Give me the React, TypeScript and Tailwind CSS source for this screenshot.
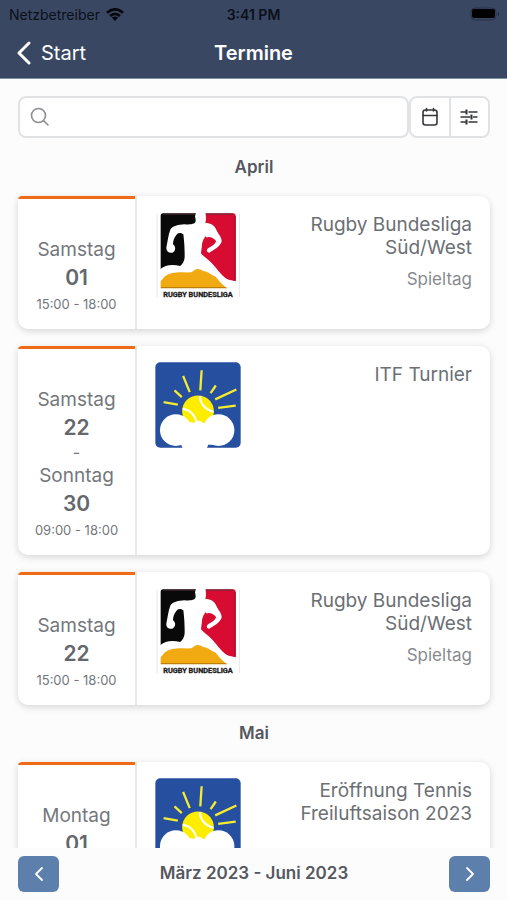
import React from 'react';

type LogoKind = 'rugby' | 'tennis';

interface DayInfo {
  name: string;
  number: string;
}

interface Termin {
  id: number;
  days: DayInfo[];
  time?: string;
  title: string;
  subtitle?: string;
  logo: LogoKind;
}

interface Month {
  name: string;
  termine: Termin[];
}

const months: Month[] = [
  {
    name: 'April',
    termine: [
      {
        id: 1,
        days: [{ name: 'Samstag', number: '01' }],
        time: '15:00 - 18:00',
        title: 'Rugby Bundesliga Süd/West',
        subtitle: 'Spieltag',
        logo: 'rugby',
      },
      {
        id: 2,
        days: [
          { name: 'Samstag', number: '22' },
          { name: 'Sonntag', number: '30' },
        ],
        time: '09:00 - 18:00',
        title: 'ITF Turnier',
        logo: 'tennis',
      },
      {
        id: 3,
        days: [{ name: 'Samstag', number: '22' }],
        time: '15:00 - 18:00',
        title: 'Rugby Bundesliga Süd/West',
        subtitle: 'Spieltag',
        logo: 'rugby',
      },
    ],
  },
  {
    name: 'Mai',
    termine: [
      {
        id: 4,
        days: [{ name: 'Montag', number: '01' }],
        title: 'Eröffnung Tennis Freiluftsaison 2023',
        logo: 'tennis',
      },
    ],
  },
];

const RugbyLogo = () => (
  <svg viewBox="30 36 258 264" className="w-[86px] h-[88px]" role="img" aria-label="Rugby Bundesliga">
    <path d="M36 42V292M283 42V292" stroke="#e6e6e6" strokeWidth="3" />
    {/* flag panels */}
    <path d="M54 40H160V207H47V48Q47 40 54 40Z" fill="#090909" />
    <path d="M180 40H264Q272 40 272 48V244H168V160Z" fill="#d80c32" />
    <path d="M47 264V240C60 220 92 216 130 213C160 200 190 206 211 228C222 242 234 253 246 264Z" fill="#f2aa12" />
    <path d="M48 263H247" stroke="#bd7f0b" strokeWidth="4" />
    <path d="M270 48V242" stroke="#a80a27" strokeWidth="4" />
    <path d="M54 42H159M183 42H264" stroke="#55333b" strokeWidth="3" />
    {/* runner */}
    <path
      d="M153 38H181C184 50 183 62 181 69C198 69 209 77 213 88C219 101 230 112 230 124C227 138 208 150 193 158C182 157 184 147 192 143C200 138 207 134 210 128C202 118 191 107 182 109C170 122 168 145 168 160C176 171 191 178 202 191C216 205 226 222 241 234C252 242 265 241 274 245V266H250C235 258 223 244 212 230C196 222 184 213 174 213C164 204 151 204 140 217C119 219 88 213 64 223C57 231 53 239 45 245V208C60 194 84 192 105 198C116 190 119 179 119 168C119 149 118 126 115 103C106 96 98 98 94 105C87 113 84 124 84 133C93 139 93 153 82 158C71 160 63 153 64 143C68 125 70 103 76 89C82 78 101 74 118 73C130 74 139 74 148 70C155 65 151 55 150 49Z"
      fill="#fff"
    />
    <path d="M182 110C192 105 206 112 214 124C209 133 200 138 190 141C192 130 187 119 182 110Z" fill="#d80c32" />
    <path d="M183 110C196 106 210 114 218 124" fill="none" stroke="#fff" strokeWidth="5" />
    <text
      x="159"
      y="291"
      textAnchor="middle"
      fontSize="22"
      fontWeight="700"
      fill="#1c1c1c"
      stroke="#1c1c1c"
      strokeWidth="1"
      fontFamily="Roboto, 'Liberation Sans', sans-serif"
    >
      RUGBY BUNDESLIGA
    </text>
  </svg>
);

const TennisLogo = () => (
  <svg viewBox="28 38 260 260" className="w-[86px] h-[86px]" role="img" aria-label="Tennis">
    <rect x="29" y="39" width="258" height="258" rx="15" fill="#264f9f" />
    {/* sun rays */}
    <path
      d="M54 159L97 167M87 124L109 144M113 80L133 129M169 63L165 124M212 109L196 132M274 121L210 151M272 170L219 177"
      stroke="#f5ec31"
      strokeWidth="7"
      fill="none"
    />
    <circle cx="158" cy="187" r="48" fill="#ffed00" />
    <path d="M164 141C163 163 179 181 205 189M112 180C132 181 149 198 153 219" stroke="#fff" strokeWidth="6" fill="none" />
    {/* cloud */}
    <circle cx="91" cy="244" r="48" fill="#fff" />
    <circle cx="220" cy="244" r="48" fill="#fff" />
    <path d="M105 215C123 216 133 220 146 222C155 211 169 216 178 226C184 219 189 212 197 209L207 288H189L184 300H112L107 288H94Z" fill="#fff" />
  </svg>
);

const TerminCard: React.FC<{ termin: Termin }> = ({ termin }) => (
  <article className="flex overflow-hidden rounded-[10px] rounded-tl-[4px] bg-white shadow-[0_2px_7px_rgba(0,0,0,0.16)]">
    <div className="w-1/4 min-w-[119px] shrink-0 border-r-2 border-[#e7e8e9]">
      <div className="h-[3px] bg-[#f06a16]" />
      <div className="pt-[37px] pb-[13px] text-center text-[#74777c]">
        {termin.days.map((day, i) => (
          <React.Fragment key={day.name}>
            {i > 0 && <div className="text-base leading-5">-</div>}
            <div className="text-[19px] leading-7">{day.name}</div>
            <div className="text-[21px] leading-7 font-semibold text-[#64676c]">{day.number}</div>
          </React.Fragment>
        ))}
        {termin.time && <div className="text-[13px] leading-6">{termin.time}</div>}
      </div>
    </div>
    <div className="flex flex-1 items-start justify-between pt-4 pr-[18px] pl-[18px]">
      {termin.logo === 'rugby' ? <RugbyLogo /> : <TennisLogo />}
      <div className="w-[185px] text-right">
        <h3 className="pt-px text-[19px] leading-[23px] text-[#6c6f74]">{termin.title}</h3>
        {termin.subtitle && <p className="mt-2 text-[17px] leading-6 text-[#888a8e]">{termin.subtitle}</p>}
      </div>
    </div>
  </article>
);

const App: React.FC = () => {
  return (
    <div className="flex h-screen flex-col bg-[#fcfcfd] font-['Inter','Liberation_Sans',sans-serif]">
      <header className="border-b border-[#7c91a6] bg-[#3a4763]">
        {/* Status bar */}
        <div className="grid h-7 grid-cols-3 items-center px-[7px] text-[14px] text-[#0b101b]">
          <div className="flex items-center gap-[6px] pl-[2px]">
            <span>Netzbetreiber</span>
            <svg viewBox="0 0 18 13" className="h-[13px] w-[18px]" fill="none" stroke="#05070c" strokeWidth="2.6">
              <path d="M1 4.7Q9-2.1 17 4.7M4 8Q9 3.6 14 8" />
              <path d="M5.8 9.6Q9 7.2 12.2 9.6L9 13Z" fill="#05070c" stroke="none" />
            </svg>
          </div>
          <span className="text-center font-semibold">3:41 PM</span>
          <svg viewBox="0 0 30 14" className="h-[14px] w-[30px] justify-self-end">
            <rect x="1" y="1" width="25" height="12" rx="4" fill="none" stroke="#293247" strokeWidth="1" />
            <rect x="2" y="2" width="23" height="9" rx="2" fill="#000" />
            <path d="M28 5Q30 7 28 9Z" fill="#202739" />
          </svg>
        </div>
        {/* Navigation */}
        <div className="grid h-[50px] grid-cols-3 items-center px-4 text-[20px] text-white">
          <a href="#start" className="flex items-center gap-[10px]">
            <svg viewBox="0 0 15 24" className="h-6 w-[15px]" fill="none" stroke="#fff" strokeWidth="3" strokeLinecap="round" strokeLinejoin="round">
              <path d="M13 2L3 12L13 22" />
            </svg>
            Start
          </a>
          <h1 className="text-center font-semibold">Termine</h1>
        </div>
      </header>

      <main className="min-h-0 flex-1 overflow-y-auto pt-[17px] pr-[17px] pl-[18px] [scrollbar-width:none]">
        <div className="flex h-[42px]">
          <label className="flex flex-1 items-center rounded-lg border-2 border-[#e1e2e3] bg-white px-[10px]">
            <svg viewBox="0 0 20 20" className="h-5 w-5 shrink-0" fill="none" stroke="#8b8d91" strokeWidth="1.6" strokeLinecap="round">
              <circle cx="8.5" cy="8.5" r="7" />
              <path d="M13.5 13.5L18 18" />
            </svg>
            <input type="search" aria-label="Termine suchen" className="ml-2 w-full min-w-0 bg-transparent text-base outline-none" />
          </label>
          <div className="flex w-[81px] rounded-lg border-2 border-[#e1e2e3] bg-white">
            <button aria-label="Kalender" className="flex flex-1 items-center justify-center border-r-2 border-[#e1e2e3]">
              <svg viewBox="0 0 18 20" className="h-5 w-[18px]" fill="none" stroke="#35373b" strokeWidth="1.6" strokeLinecap="round">
                <rect x="2" y="3" width="14" height="15" rx="2.5" />
                <path d="M2 8.5H16M5.5 1.5V4M12.5 1.5V4" />
              </svg>
            </button>
            <button aria-label="Filter" className="flex flex-1 items-center justify-center">
              <svg viewBox="0 0 18 16" className="h-4 w-[18px]" fill="none" stroke="#35373b" strokeWidth="1.7">
                <path d="M.5 3H6M8.5 3H17.5M.5 8H10.5M13 8H17.5M.5 13H6M8.5 13H17.5" />
                <path d="M6.5 .5V5.5M11.5 5.5V10.5M6.5 10.5V15.5" strokeWidth="2" />
              </svg>
            </button>
          </div>
        </div>

        <div className="pt-px">
          {months.map((month) => (
            <section key={month.name}>
              <h2 className="flex h-[57px] items-center justify-center text-[17px] font-semibold text-[#55585e]">{month.name}</h2>
              <div className="flex flex-col gap-[17px]">
                {month.termine.map((termin) => (
                  <TerminCard key={termin.id} termin={termin} />
                ))}
              </div>
            </section>
          ))}
        </div>
      </main>

      <footer className="flex h-[52px] shrink-0 items-center justify-between bg-[#fcfcfd] pr-[17px] pl-[18px]">
        <button aria-label="Zurück" className="flex h-9 w-[41px] items-center justify-center rounded-md bg-[#5d7fac]">
          <svg viewBox="0 0 10 16" className="h-4 w-[10px]" fill="none" stroke="#fff" strokeWidth="1.8" strokeLinecap="round" strokeLinejoin="round">
            <path d="M8 2L2 8L8 14" />
          </svg>
        </button>
        <span className="text-[17px] font-semibold text-[#55585e]">März 2023 - Juni 2023</span>
        <button aria-label="Weiter" className="flex h-9 w-[41px] items-center justify-center rounded-md bg-[#5d7fac]">
          <svg viewBox="0 0 10 16" className="h-4 w-[10px]" fill="none" stroke="#fff" strokeWidth="1.8" strokeLinecap="round" strokeLinejoin="round">
            <path d="M2 2L8 8L2 14" />
          </svg>
        </button>
      </footer>
    </div>
  );
};

export default App;
